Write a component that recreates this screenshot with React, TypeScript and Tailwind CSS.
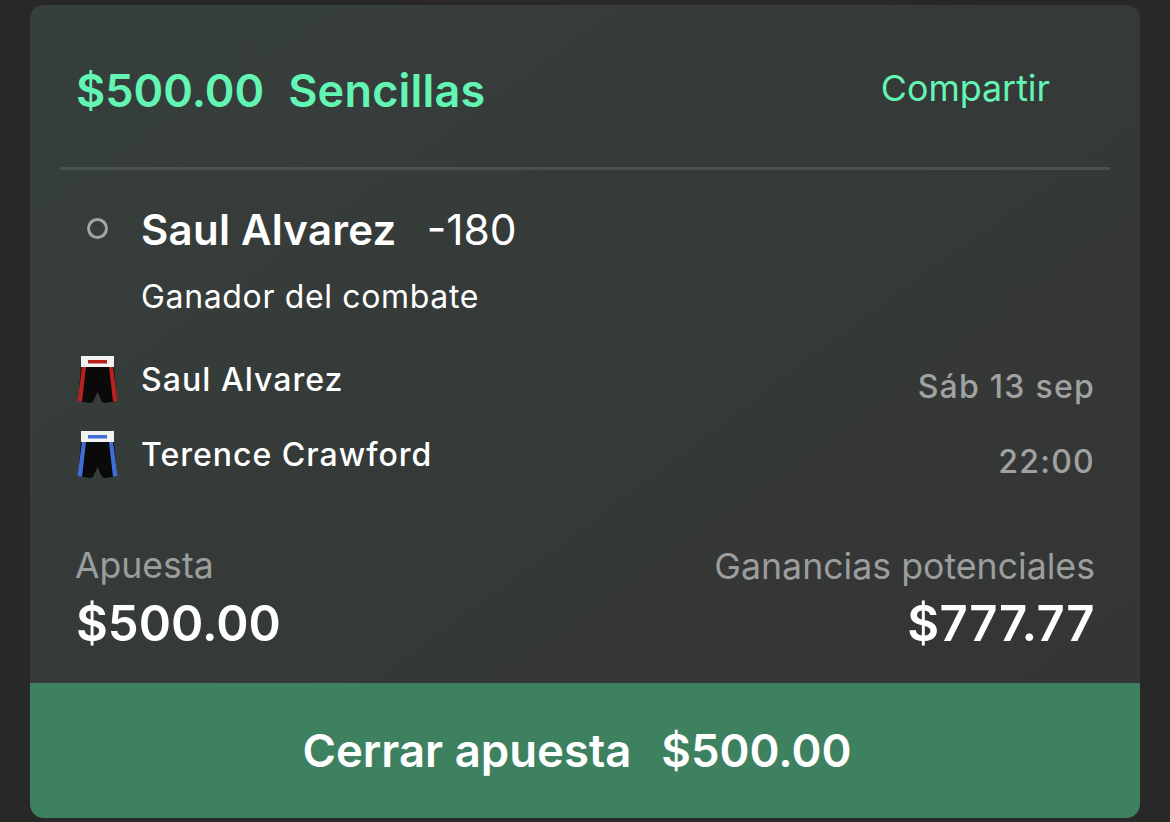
function Shorts({ color }: { color: string }) {
  return (
    <svg width="42" height="48" viewBox="0 0 42 48" className="shrink-0">
      <path d="M5 11 L38 11 L41 45 L29 47 L26 46 L21.5 36 L17 46 L14 47 L2 45 Z" fill="#0a0a0a" />
      <path d="M6 11 L10 11 L6 45.7 L1.5 45 Z" fill={color} />
      <path d="M33 11 L37 11 L41.5 45 L37 45.7 Z" fill={color} />
      <rect x="5" y="0" width="33" height="11" fill="#f2f2f2" />
      <rect x="12" y="4" width="19" height="3.5" fill={color} />
    </svg>
  );
}

export default function App() {
  return (
    <div className="h-[822px] w-[1170px] overflow-hidden bg-[#282828] pt-[5px] pl-[30px] font-['Inter',sans-serif] text-white">
      <div className="flex h-[813px] w-[1110px] flex-col overflow-hidden rounded-[14px] bg-gradient-to-br from-[#363f3c] to-[#343434]">
        <div className="mx-[30px] flex h-[165px] items-center justify-between border-b-[3px] border-[#4a524f] pt-[9px] pr-[60px] pl-[16px]">
          <div className="flex gap-[24px] text-[45px] leading-none font-semibold text-[#62f5b4]">
            <span>$500.00</span>
            <span className="tracking-[0.2px]">Sencillas</span>
          </div>
          <span className="-mt-[4px] text-[35.8px] leading-none text-[#62f5b4]">Compartir</span>
        </div>

        <div className="flex flex-1 flex-col px-[46px]">
          <div className="mt-[36px] flex items-center">
            <span className="-mt-[3px] ml-[11px] h-[21px] w-[21px] rounded-full border-[3px] border-[#a3a6a4]" />
            <span className="ml-[33px] text-[42px] leading-[48px] font-semibold tracking-[0.25px]">Saul Alvarez</span>
            <span className="ml-[30px] text-[42.5px] leading-[48px]">-180</span>
          </div>
          <p className="mt-[23px] ml-[65px] text-[32px] leading-[40px] tracking-[0.65px]">Ganador del combate</p>

          <div className="mt-[39px] flex justify-between">
            <div className="flex flex-col gap-[27px]">
              <div className="flex items-center gap-[23px]">
                <Shorts color="#b8231f" />
                <span className="-mt-[1px] text-[32px] leading-[40px] font-medium tracking-[1.05px]">Saul Alvarez</span>
              </div>
              <div className="flex items-center gap-[23px]">
                <Shorts color="#3f6fd6" />
                <span className="-mt-[1px] text-[32px] leading-[40px] font-medium tracking-[1px]">Terence Crawford</span>
              </div>
            </div>
            <div className="-mr-[1px] flex flex-col items-end gap-[35px] pt-[11px] text-[32px] leading-[40px] font-medium tracking-[1.25px] text-[#a0a2a1]">
              <span>Sáb 13 sep</span>
              <span>22:00</span>
            </div>
          </div>

          <div className="mt-[64px] flex justify-between">
            <div className="-ml-[1px] flex flex-col gap-[10px]">
              <span className="text-[35.6px] leading-[40px] text-[#9c9e9d]">Apuesta</span>
              <span className="ml-[1px] text-[49px] leading-[56px] font-semibold">$500.00</span>
            </div>
            <div className="-mr-[1px] flex flex-col items-end gap-[10px]">
              <span className="text-[35.7px] leading-[40px] text-[#9c9e9d]">Ganancias potenciales</span>
              <span className="text-[49px] leading-[56px] font-semibold tracking-[0.5px]">$777.77</span>
            </div>
          </div>
        </div>

        <div className="flex h-[135px] items-center justify-center gap-[30px] bg-[#3d8161] pr-[16px] text-[45.5px] leading-none font-semibold">
          <span>Cerrar apuesta</span>
          <span>$500.00</span>
        </div>
      </div>
    </div>
  );
}
